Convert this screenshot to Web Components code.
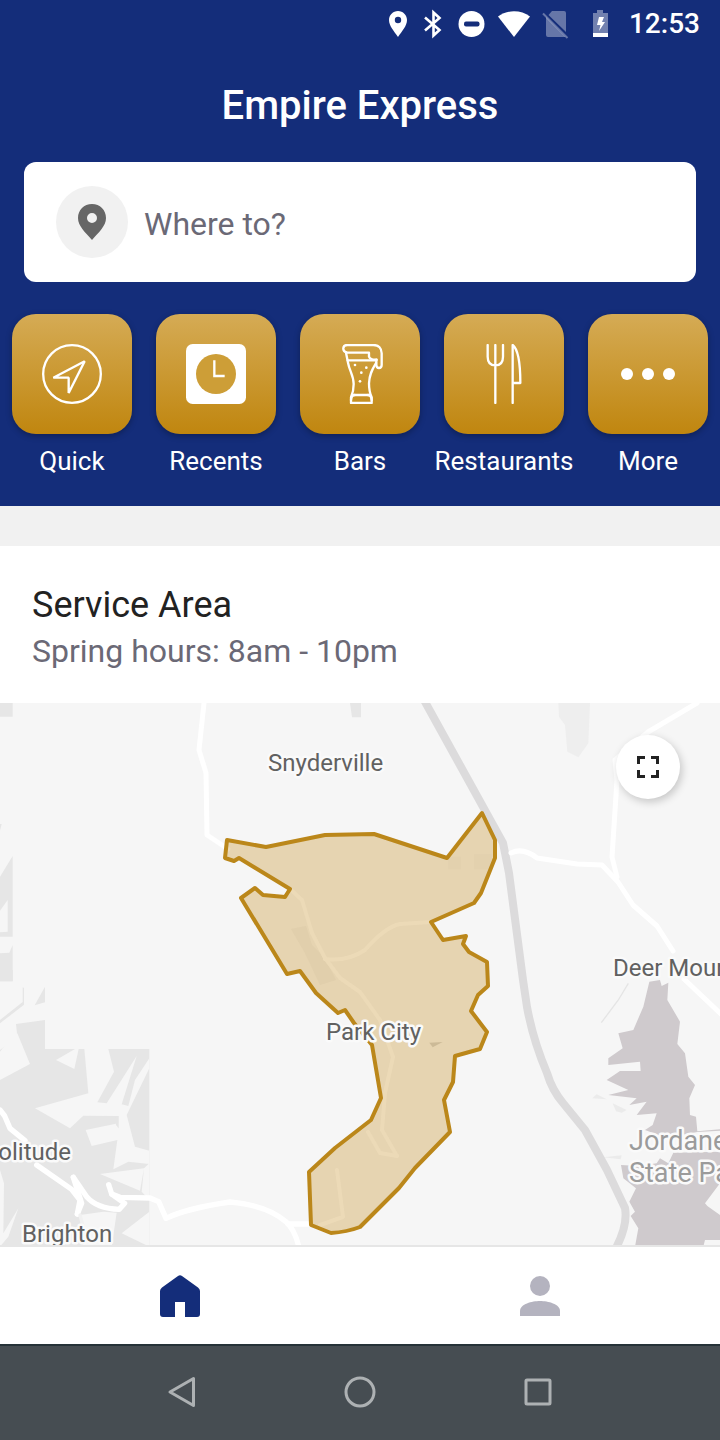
<!DOCTYPE html>
<html lang="en">
<head>
	<meta charset="utf-8">
	<title>Empire Express</title>
	<meta name="viewport" content="width=device-width">
</head>
<style>
body, html {
	margin:0;
	font-family: Roboto, sans-serif;
	background:#f1f1f1;
}
</style>
<body>
<ride-app>
	<status-bar slot="top">12:53</status-bar>
	<app-header slot="top">
		Empire Express
		<search-box slot="search" placeholder="Where to?"></search-box>
		<category-tile slot="tiles" icon="quick">Quick</category-tile>
		<category-tile slot="tiles" icon="recents">Recents</category-tile>
		<category-tile slot="tiles" icon="bars">Bars</category-tile>
		<category-tile slot="tiles" icon="restaurants">Restaurants</category-tile>
		<category-tile slot="tiles" icon="more">More</category-tile>
	</app-header>
	<service-area>
		<span slot="title">Service Area</span>
		<span slot="hours">Spring hours: 8am - 10pm</span>
	</service-area>
	<area-map></area-map>
	<tab-bar slot="bottom"></tab-bar>
	<system-nav slot="bottom"></system-nav>
</ride-app>
</body>

<script type="text/javascript">
// icons of the category tiles, all drawn on a 180 grid
const tileIcons = {
	quick: `<svg viewBox="126 132 180 180" fill="none" stroke="#fff" stroke-width="7">
		<circle cx="216" cy="222" r="86.5"/>
		<path d="M254 184 L160 233 H206 V279 Z" stroke-linejoin="bevel"/>
	</svg>`,
	recents: `<svg viewBox="558 132 180 180">
		<rect x="558" y="132" width="180" height="180" rx="20" fill="#fff"/>
		<circle cx="648" cy="222" r="60" fill="#cd9e37"/>
		<path d="M643 181 V228 H674" fill="none" stroke="#fff" stroke-width="7"/>
	</svg>`,
	bars: `<svg viewBox="150 132 180 180" fill="none" stroke="#fff" stroke-width="7" stroke-linecap="round" stroke-linejoin="round">
		<path d="M199 157 C186 153 187 135 202 135 H280 C296 135 305 145 305 160 V195 C305 207 289 207 289 195 V179"/>
		<path d="M198 158 H267 V170 C270 178 278 180 290 179"/>
		<path d="M198 158 L204 188 C209 215 221 226 221 252 C221 268 220 277 213 292 V309 H275 V292 C267 275 267 266 267 250 C268 224 276 209 288 189"/>
		<path d="M203 181 H289 M220 285 H268"/>
		<path d="M213 300 Q214 286 224 285 M275 300 Q274 286 264 285"/>
		<g fill="#fff" stroke="none"><circle cx="225" cy="195" r="4"/><circle cx="259" cy="203" r="4"/><circle cx="244" cy="218" r="4"/><circle cx="240" cy="244" r="4"/></g>
	</svg>`,
	restaurants: `<svg viewBox="582 132 180 180" fill="none" stroke="#fff" stroke-width="7" stroke-linecap="round" stroke-linejoin="round">
		<path d="M623 135 V170 C623 188 633 196 646 196 C659 196 669 188 669 170 V135 M646 135 V309"/>
		<path d="M698 309 V135 C711 145 721 180 721 249 H699"/>
	</svg>`,
	more: `<svg viewBox="174 132 180 180" fill="#fff">
		<circle cx="201" cy="222" r="18"/><circle cx="264" cy="222" r="18"/><circle cx="327" cy="222" r="18"/>
	</svg>`
}

// elements
customElements.define('ride-app', class extends HTMLElement {
	constructor() {
		super()
		this.attachShadow({mode:'open'}).innerHTML=`
		<style>
		:host {
			display:flex;
			flex-direction:column;
			min-height:100vh;
		}
		main {
			flex:1;
			display:flex;
			flex-direction:column;
			padding-top:40px;
		}
		</style>
		<slot name="top"></slot>
		<main><slot></slot></main>
		<slot name="bottom"></slot>
		`
	}
})

customElements.define('status-bar', class extends HTMLElement {
	constructor() {
		super()
		this.attachShadow({mode:'open'}).innerHTML=`
		<style>
		:host {
			display:flex;
			align-items:center;
			justify-content:flex-end;
			gap:14px;
			height:48px;
			padding-right:20px;
			background:#142d7a;
			color:white;
			font-size:28px;
			line-height:36px;
			font-weight:500;
		}
		svg {
			height:26px;
			fill:white;
			overflow:visible;
		}
		</style>
		<svg width="18" viewBox="0 0 18 26"><path fill-rule="evenodd" d="M9 0 C4 0 0 4 0 9 C0 15 5 20 9 26 C13 20 18 15 18 9 C18 4 14 0 9 0 Z M9 5.800 A3.200 3.200 0 1 1 9 12.200 A3.200 3.200 0 1 1 9 5.800 Z"/></svg>
		<svg width="24" viewBox="0 0 24 26"><path d="M4 6.500 L18.500 19 L12.500 24.500 V1.500 L18.500 7 L4 19.500" fill="none" stroke="#fff" stroke-width="2.600"/></svg>
		<svg width="26" viewBox="0 0 26 26"><circle cx="12.500" cy="13" r="13"/><rect x="5" y="10.500" width="15.500" height="5" rx="2" fill="#142d7a"/></svg>
		<svg width="30" viewBox="0 0 30 26"><path d="M15 26 L-1 5.500 C8 -1.500 22 -1.500 31 5.500 Z"/></svg>
		<svg width="26" viewBox="0 0 26 26"><path d="M9 0 H21 Q23 0 23 2 V21 L5.500 4 Z M3 6 L22.500 26 H5 Q3 26 3 24 Z" opacity=".35"/><path d="M0 2.500 L24.500 27" stroke="#fff" stroke-width="2" opacity=".35"/></svg>
		<svg width="32" viewBox="0 0 32 26"><path d="M10 2 H14 V-1 H20 V2 H25 V22 H10 Z" opacity=".4"/><path d="M10 22 H25 V26 H10 Z"/><path d="M16 6 H21 L19 11 H22 L16 20 L17.500 14 H14 Z"/></svg>
		<slot></slot>
		`
	}
})

customElements.define('app-header', class extends HTMLElement {
	constructor() {
		super()
		this.attachShadow({mode:'open'}).innerHTML=`
		<style>
		:host {
			display:block;
			background:#142d7a;
			color:white;
			padding:2px 0 30px;
		}
		h1 {
			margin:0;
			text-align:center;
			font-size:40px;
			font-weight:500;
			line-height:112px;
		}
		.search {
			padding:0 24px;
		}
		.tiles {
			display:grid;
			grid-template-columns:repeat(5, 1fr);
			margin-top:32px;
		}
		</style>
		<h1><slot></slot></h1>
		<div class="search"><slot name="search"></slot></div>
		<div class="tiles"><slot name="tiles"></slot></div>
		`
	}
})

customElements.define('search-box', class extends HTMLElement {
	constructor() {
		super()
		this.attachShadow({mode:'open'}).innerHTML=`
		<style>
		:host {
			display:block;
		}
		label {
			display:flex;
			align-items:center;
			gap:16px;
			padding:24px 32px;
			background:white;
			border-radius:12px;
		}
		.pin {
			display:grid;
			place-items:center;
			flex:none;
			width:72px;
			height:72px;
			border-radius:50%;
			background:#f1f1f1;
		}
		input {
			flex:1;
			min-width:0;
			border:0;
			padding:4px 0 0;
			outline:0;
			background:none;
			font:32px/40px Roboto, sans-serif;
			color:#222;
		}
		input::placeholder {
			color:#6b6976;
			opacity:1;
		}
		</style>
		<label for="where">
			<span class="pin"><svg width="28" height="36" viewBox="0 0 28 36"><path fill="#666" fill-rule="evenodd" d="M14 0 C6 0 0 6 0 14 C0 22 7 28 14 36 C21 28 28 22 28 14 C28 6 22 0 14 0 Z M14 9 A5 5 0 1 1 14 19 A5 5 0 1 1 14 9 Z"/></svg></span>
			<input id="where" type="text">
		</label>
		`
		this.shadowRoot.querySelector('input').placeholder = this.getAttribute('placeholder')
	}
})

customElements.define('category-tile', class extends HTMLElement {
	constructor() {
		super()
		this.attachShadow({mode:'open'}).innerHTML=`
		<style>
		:host {
			display:block;
			min-width:0;
		}
		button {
			display:flex;
			flex-direction:column;
			align-items:center;
			gap:12px;
			width:100%;
			padding:0;
			border:0;
			background:none;
			color:white;
			font:26px/30px Roboto, sans-serif;
			cursor:pointer;
		}
		.tile {
			display:grid;
			place-items:center;
			width:120px;
			height:120px;
			border-radius:24px;
			background:linear-gradient(#d5ab55, #c0860f);
			box-shadow:0 2px 6px rgba(0,0,0,0.3);
		}
		.tile svg {
			width:60px;
			height:60px;
		}
		</style>
		<button type="button">
			<span class="tile">${tileIcons[this.getAttribute('icon')]}</span>
			<slot></slot>
		</button>
		`
	}
})

customElements.define('service-area', class extends HTMLElement {
	constructor() {
		super()
		this.attachShadow({mode:'open'}).innerHTML=`
		<style>
		:host {
			display:flex;
			flex-direction:column;
			gap:4px;
			padding:37px 32px 32px;
			background:white;
		}
		h2, p {
			margin:0;
			font-weight:400;
		}
		h2 {
			font-size:36px;
			line-height:44px;
			color:#222;
		}
		p {
			font-size:32px;
			line-height:40px;
			color:#6b6976;
		}
		</style>
		<h2><slot name="title"></slot></h2>
		<p><slot name="hours"></slot></p>
		`
	}
})

customElements.define('area-map', class extends HTMLElement {
	constructor() {
		super()
		this.attachShadow({mode:'open'}).innerHTML=`
		<style>
		:host {
			display:block;
			position:relative;
			flex:1;
			min-height:400px;
			overflow:hidden;
			background:#f6f6f6;
		}
		.map {
			position:absolute;
			width:100%;
			height:100%;
		}
		.road {
			fill:none;
			stroke:white;
			stroke-width:5;
			stroke-linecap:round;
			stroke-linejoin:round;
		}
		.highway {
			fill:none;
			stroke:#dcdbdc;
			stroke-width:8;
			stroke-linejoin:round;
		}
		.rock { fill:#e6e6e6; }
		.land { fill:#f6f6f6; }
		.zone {
			fill:#bf860f;
			fill-opacity:0.3;
			stroke:#bb871a;
			stroke-width:4;
			stroke-linejoin:round;
		}
		text {
			font-family:Roboto, sans-serif;
			font-size:24px;
			fill:#616161;
			stroke:#fafafa;
			stroke-width:5;
			stroke-linejoin:round;
			paint-order:stroke;
		}
		.park text {
			font-size:27px;
			fill:#9b9b9b;
		}
		button {
			position:absolute;
			top:32px;
			right:40px;
			display:grid;
			place-items:center;
			width:64px;
			height:64px;
			padding:0;
			border:0;
			border-radius:50%;
			background:white;
			box-shadow:2px 3px 8px rgba(0,0,0,0.2);
			cursor:pointer;
		}
		</style>
		<svg class="map" viewBox="0 703 720 542" preserveAspectRatio="xMidYMin slice">
			<!-- rocky ground on the west side -->
			<g transform="translate(0 700) scale(.33333)">
				<path class="rock" d="M0 9 H38 V50 H0 Z M0 372 H5 L0 392 Z M0 530 L38 468 V710 H0 Z M0 760 L28 758 L38 735 V844 H0 Z M1050 9 H1083 V52 H1056 Z"/>
				<path class="land" d="M0 632 L23 600 V695 L0 697 Z"/>
			</g>
			<g transform="translate(0 970) scale(.33333)">
				<path class="rock" d="M0 0 H38 V34 H0 Z M0 150 L68 96 V52 L72 54 V104 L0 160 Z M104 106 L135 50 V97 Z M48 162 L135 150 V237 H448 V830 H0 V240 L52 200 Z"/>
				<path class="land" d="M52 190 L90 282 L0 330 V245 L30 205 Z M168 270 L225 237 H236 L223 297 Z"/>
				<path class="land" d="M253 237 H325 L342 305 L292 397 L320 400 L410 258 L365 403 L385 408 L405 330 L448 265 V295 L380 435 L405 530 L448 542 V582 L385 575 L340 598 L352 510 L275 528 L257 480 L355 460 V438 L250 437 L210 475 L105 415 L265 370 Z"/>
				<path class="land" d="M300 612 L432 595 L420 662 Z M365 790 L448 725 V830 Z M448 580 V690 L425 665 L432 595 Z M0 600 L12 640 L10 790 L55 715 L25 800 L0 830 Z M240 735 L310 725 L350 728 L335 830 H250 Z"/>
				<path class="rock" d="M345 438 H356 V475 L348 465 Z"/>
				<g class="road" style="stroke-width:16">
					<path d="M0 420 L14 438 L30 475 L75 512 M110 585 L215 658 L240 690 L232 732"/>
					<path d="M220 622 L260 680 Q290 715 358 718 L374 700 L335 672 L326 644"/>
					<path d="M220 622 L245 700 L232 732"/>
					<path d="M335 672 L360 682 L450 684 L476 695 L498 745 Q560 715 690 696 Q800 705 858 755 Q885 780 897 832"/>
					<path d="M864 762 H930"/>
				</g>
				<path class="road" d="M240 735 L252 780" style="stroke-width:10;stroke:#f1f1f1"/>
			</g>
			<!-- reservoir and the ground on the east side -->
			<g transform="translate(360 700) scale(.33333)">
				<path fill="#eeeeee" d="M595 9 H690 L685 130 L655 172 L622 155 L615 75 L597 50 Z"/>
				<path fill="#f2f2f3" d="M265 470 H303 V508 H265 Z M342 463 H395 V508 H342 Z"/>
			</g>
			<g transform="translate(360 970) scale(.33333)">
				<path fill="#cfcacd" d="M868 35 L900 30 L905 48 L925 38 L922 90 L960 155 L952 222 L975 250 L985 320 L1005 345 L988 385 L990 435 L1008 440 L1012 484 L1080 478 V640 L1035 700 L1042 708 L1080 735 V810 H1035 L1030 830 H825 L835 775 L812 738 L825 725 L808 695 L828 655 L790 625 L783 585 L835 588 L890 580 L900 565 L925 580 L940 548 L935 510 L855 480 L878 465 L890 430 L830 435 L860 395 L808 405 L830 385 L745 375 L805 360 L740 330 L780 303 H842 L840 275 L745 285 V265 L788 235 L775 190 L820 180 L850 110 Z"/>
				<path class="land" d="M1012 486 L1080 482 V545 L940 548 L935 500 Z"/>
				<path fill="#ebebeb" d="M697 385 L710 373 L740 388 Z M758 400 L800 420 L785 428 L768 424 Z M730 562 L785 556 L782 568 Z"/>
				<path d="M805 40 L775 90 L724 158" fill="none" stroke="#e5e5e5" stroke-width="4"/>
				<path fill="#d2d2d2" d="M208 218 L248 216 L218 232 Z"/>
			</g>
			<path fill="#efefef" d="M291 929 L306 926 L312 945 L325 958 L336 980 L320 985 L305 953 Z"/>
			<path class="highway" d="M424 700 L503 843 L509 873 L523 980 L527 1007 Q533 1040 547 1073 Q552 1090 563 1103 L585 1130 L607 1170 L625 1208 Q628 1225 616 1248"/>
			<path class="road" d="M204 703 L199 750 L206 773 L207 835 L228 849"/>
			<g class="road">
				<path d="M511 853 Q523 847 537 858 L577 864 L602 865 L618 882 L633 905 L657 926 L673 951"/>
				<path d="M617 877 L612 857 L617 780 L615 760 L648 732 L697 703"/>
				<path d="M684 979 L722 1015"/>
			</g>
			<g class="road" style="stroke-width:4;stroke:#fff">
				<path d="M290 889 L302 900 L312 933 L325 958 L340 978 L360 992 L380 1020 L393 1057 L385 1093 L382 1130 L397 1156"/>
				<path d="M325 959 Q347 962 365 950 Q385 927 400 924 L431 922 M368 1132 L380 1153 L397 1156 M337 1170 L343 1217 L320 1225"/>
			</g>
			<path class="zone" d="M227 840 L266 847 L325 835 L374 834 L447 858 L482 813 L495 840 V858 L481 893 L474 903 L431 922 L443 940 L466 936 L463 944 L469 952 L487 962 L488 986 L478 995 L471 1011 L487 1032 L480 1049 L455 1056 L453 1082 L444 1100 L450 1132 L415 1168 L399 1188 L360 1227 Q347 1232 331 1233 L311 1225 L309 1172 L335 1148 L371 1120 L381 1098 L372 1045 L354 1023 L345 1010 L338 1013 L316 993 L300 971 L287 974 L241 898 L255 888 L263 895 L285 897 L290 889 L239 858 L234 861 L225 858 Z"/>
			<text x="268" y="771">Snyderville</text>
			<text x="613" y="976">Deer Mountain</text>
			<text x="326" y="1040">Park City</text>
			<text x="71" y="1160" text-anchor="end">Solitude</text>
			<text x="22" y="1242">Brighton</text>
			<g class="park">
				<text x="629" y="1150">Jordanelle</text>
				<text x="629" y="1182">State Park</text>
			</g>
		</svg>
		<button type="button" aria-label="Full screen">
			<svg width="22" height="22" viewBox="0 0 22 22" fill="none" stroke="#222" stroke-width="3"><path d="M1.500 8 V1.500 H8 M14 1.500 H20.500 V8 M20.500 14 V20.500 H14 M8 20.500 H1.500 V14"/></svg>
		</button>
		`
	}
})

customElements.define('tab-bar', class extends HTMLElement {
	constructor() {
		super()
		this.attachShadow({mode:'open'}).innerHTML=`
		<style>
		:host {
			display:block;
			border-top:2px solid #e6e6e6;
			background:white;
		}
		nav {
			display:grid;
			grid-template-columns:1fr 1fr;
		}
		a {
			display:grid;
			place-items:center;
			height:97px;
			color:#b4b3bf;
		}
		a.active {
			color:#142d7a;
		}
		svg {
			fill:currentColor;
		}
		</style>
		<nav>
			<a class="active" href="#home" aria-label="Home"><svg width="40" height="42" viewBox="0 0 40 42"><path d="M18 1 Q20 -.500 22 1 L38 12.500 Q40 14 40 16 V39 Q40 42 37 42 H25 V27 H15 V42 H3 Q0 42 0 39 V16 Q0 14 2 12.500 Z"/></svg></a>
			<a href="#profile" aria-label="Profile"><svg width="40" height="40" viewBox="0 0 40 40"><circle cx="20" cy="10" r="10"/><path d="M0 40 V35 C0 28 12 25 20 25 C28 25 40 28 40 35 V40 Z"/></svg></a>
		</nav>
		`
	}
})

customElements.define('system-nav', class extends HTMLElement {
	constructor() {
		super()
		this.attachShadow({mode:'open'}).innerHTML=`
		<style>
		:host {
			display:grid;
			grid-template-columns:repeat(3, 178px);
			justify-content:center;
			height:96px;
			background:#464d52;
			box-shadow:inset 0 2px #263238;
		}
		button {
			display:grid;
			place-items:center;
			padding:0;
			border:0;
			background:none;
			cursor:pointer;
		}
		svg {
			fill:none;
			stroke:#adb1b3;
			stroke-width:3;
			stroke-linejoin:round;
		}
		</style>
		<button type="button" aria-label="Back"><svg width="32" height="32" viewBox="0 0 32 32"><path d="M27.500 2.500 V29.500 L4 16 Z"/></svg></button>
		<button type="button" aria-label="Home"><svg width="32" height="32" viewBox="0 0 32 32"><circle cx="16" cy="16" r="14"/></svg></button>
		<button type="button" aria-label="Overview"><svg width="32" height="32" viewBox="0 0 32 32"><rect x="4" y="4" width="24" height="24" rx="1"/></svg></button>
		`
	}
})
</script>
</html>
